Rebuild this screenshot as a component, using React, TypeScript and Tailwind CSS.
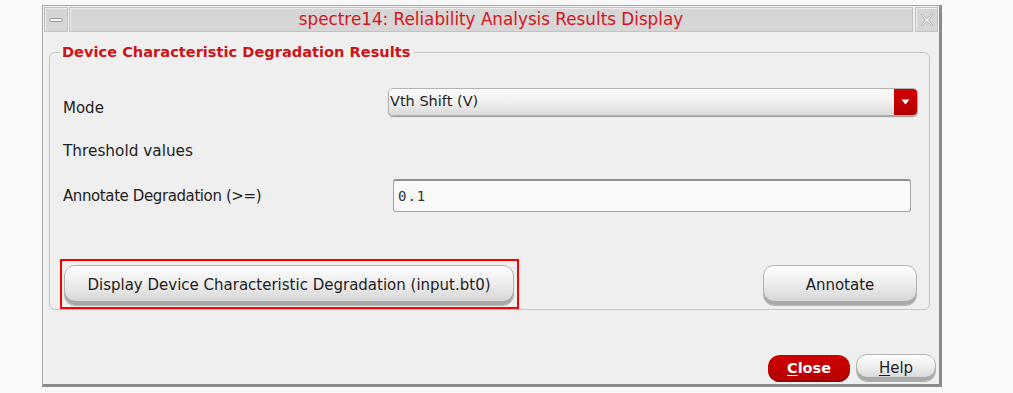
const grayBtn =
  "flex items-center justify-center rounded-[11px] border border-[#b3b3b3] bg-linear-to-b from-[#fefefe] via-[#ebebeb] to-[#d2d2d2] shadow-[inset_0_-4px_0_#a9a9a9,inset_0_1px_0_#ffffff] text-[15px] text-[#1e1e1e]";

const TitleBar = () => (
  <div className="mx-[1px] mt-[1px] flex h-[25px] gap-[1px]">
    <div className="flex w-[24px] items-center justify-center border border-[#c2c2c2] bg-[#d6d6d6] shadow-[inset_1px_1px_0_#ececec]">
      <div className="mt-[1px] h-[4px] w-[14px] rounded-[2px] border border-[#9c9c9c] bg-[#f4f4f4]" />
    </div>
    <div className="flex flex-1 items-center justify-center border border-[#c2c2c2] bg-[#d6d6d6] shadow-[inset_1px_1px_0_#ececec]">
      <span className="text-[16.8px] leading-none text-[#d4141c]">
        spectre14: Reliability Analysis Results Display
      </span>
    </div>
    <div className="ml-[1px] flex w-[23px] items-center justify-center border border-[#c2c2c2] bg-[#d6d6d6] shadow-[inset_1px_1px_0_#ececec]">
      <svg width="14" height="14" viewBox="0 0 14 14">
        <path
          d="M2 1 L7 5.5 L12 1 L13 2 L8.5 7 L13 12 L12 13 L7 8.5 L2 13 L1 12 L5.5 7 L1 2 Z"
          fill="#f2f2f2"
          stroke="#a8a8a8"
          strokeWidth="0.8"
        />
      </svg>
    </div>
  </div>
);

export default function App() {
  return (
    <div className="min-h-screen w-full bg-[#f9f9f9] pl-[42px] pt-[5px] font-['DejaVu_Sans',sans-serif]">
      <div className="flex h-[382px] w-[900px] flex-col border-b-[3px] border-l border-r-[3px] border-t border-[#a9a9a9] border-b-[#8b8b8b] border-r-[#8b8b8b] bg-[#efefef]">
        <TitleBar />

        <fieldset className="ml-[6px] mr-[9px] mt-[11px] rounded-[6px] border border-[#c4c4c4] p-0">
          <legend className="ml-[10px] pl-[2px] pr-[4px] text-[14.6px] font-bold leading-[18px] text-[#cc1418]">
            Device Characteristic Degradation Results
          </legend>

          <div className="mt-[27px] flex h-[28px] items-start pl-[13px] pr-[11px]">
            <span className="mt-[11px] w-[325px] text-[15px] leading-[18px] text-[#222]">Mode</span>
            <div className="flex h-[28px] flex-1 overflow-hidden rounded-[5px] border border-[#b1b1b1] shadow-[0_1px_1px_#9a9a9a]">
              <div className="flex flex-1 items-center bg-linear-to-b from-[#fbfbfb] via-[#f0f0f0] to-[#d9d9d9] pl-[1px] text-[14.5px] text-[#1e1e1e]">
                Vth Shift (V)
              </div>
              <div className="flex w-[23px] items-center justify-center bg-linear-to-b from-[#d40000] to-[#b00000]">
                <svg width="9" height="6" viewBox="0 0 9 6">
                  <path d="M0.5 0.5 H8.5 L4.5 5.5 Z" fill="#ffffff" />
                </svg>
              </div>
            </div>
          </div>

          <div className="mt-[25px] flex h-[20px] items-center pl-[13px]">
            <span className="text-[15.3px] leading-[20px] text-[#222]">Threshold values</span>
          </div>

          <div className="mt-[18px] flex h-[33px] items-center pl-[13px] pr-[18px]">
            <span className="w-[330px] text-[15px] leading-[20px] tracking-[-0.4px] text-[#222]">Annotate Degradation (&gt;=)</span>
            <div className="flex h-[33px] flex-1 items-center rounded-[3px] border border-t-2 border-[#a3a3a3] border-t-[#8f8f8f] bg-[#f9f9f9] pl-[4px]">
              <span className="font-['DejaVu_Sans_Mono',monospace] text-[14px] tracking-[1px] text-[#333]">0.1</span>
            </div>
          </div>

          <div className="mt-[47px] flex h-[50px] items-start">
            <div className="ml-[10px] flex h-[50px] w-[459px] border-2 border-[#ff0000] pb-[1px] pl-[2px] pr-[3px] pt-[4px]">
              <button className={`${grayBtn} h-[41px] flex-1`}>
                Display Device Characteristic Degradation (input.bt0)
              </button>
            </div>
            <button className={`${grayBtn} ml-auto mr-[12px] mt-[6px] h-[41px] w-[154px]`}>Annotate</button>
          </div>
        </fieldset>

        <div className="flex flex-1 items-end justify-end gap-[6px] pb-[2px] pr-[3px]">
          <button className="flex h-[27px] w-[82px] items-center justify-center rounded-[12px] bg-linear-to-b from-[#d00000] to-[#b40000] text-[14.5px] font-bold text-white shadow-[inset_0_-2px_0_#980000]">
            <span className="underline underline-offset-2">C</span>lose
          </button>
          <button className={`${grayBtn} h-[28px] w-[80px]`}>
            <span className="underline underline-offset-2">H</span>elp
          </button>
        </div>
      </div>
    </div>
  );
}
